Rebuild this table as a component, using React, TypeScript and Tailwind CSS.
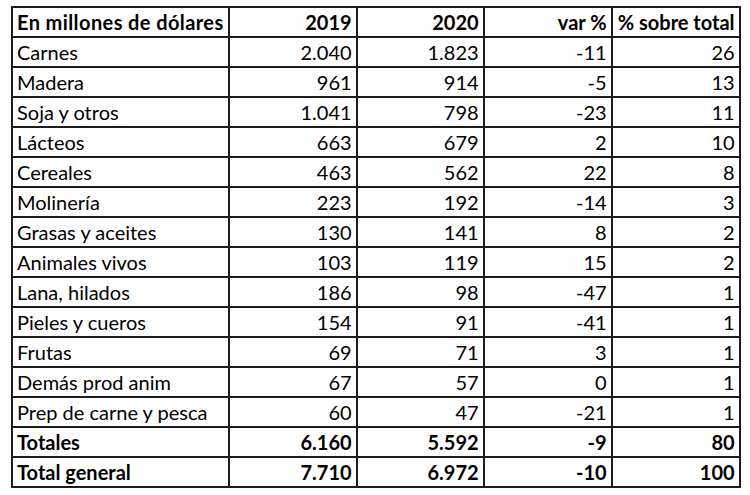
const rows: [string, string, string, string, string][] = [
  ["Carnes", "2.040", "1.823", "-11", "26"],
  ["Madera", "961", "914", "-5", "13"],
  ["Soja y otros", "1.041", "798", "-23", "11"],
  ["Lácteos", "663", "679", "2", "10"],
  ["Cereales", "463", "562", "22", "8"],
  ["Molinería", "223", "192", "-14", "3"],
  ["Grasas y aceites", "130", "141", "8", "2"],
  ["Animales vivos", "103", "119", "15", "2"],
  ["Lana, hilados", "186", "98", "-47", "1"],
  ["Pieles y cueros", "154", "91", "-41", "1"],
  ["Frutas", "69", "71", "3", "1"],
  ["Demás prod anim", "67", "57", "0", "1"],
  ["Prep de carne y pesca", "60", "47", "-21", "1"],
]

const totals: [string, string, string, string, string][] = [
  ["Totales", "6.160", "5.592", "-9", "80"],
  ["Total general", "7.710", "6.972", "-10", "100"],
]

const cell = "h-[30px] whitespace-nowrap border-2 border-[#1c1c1c] px-[4px] leading-none"

export default function App() {
  return (
    <div className="h-[495px] w-[750px] overflow-hidden bg-white pl-[11px] pt-[6px]">
      <table
        className="table-fixed border-collapse text-[20px] text-black"
        style={{ fontFamily: "Lato, 'Open Sans', sans-serif" }}
      >
        <colgroup>
          <col className="w-[215px]" />
          <col className="w-[128px]" />
          <col className="w-[127px]" />
          <col className="w-[128px]" />
          <col className="w-[128px]" />
        </colgroup>
        <thead>
          <tr className="font-bold">
            <th className={`${cell} text-left tracking-[0.4px]`}>En millones de dólares</th>
            <th className={`${cell} text-right`}>2019</th>
            <th className={`${cell} text-right`}>2020</th>
            <th className={`${cell} text-right`}>var %</th>
            <th className={`${cell} text-right`}>% sobre total</th>
          </tr>
        </thead>
        <tbody>
          {rows.map((r) => (
            <tr key={r[0]}>
              <td className={`${cell} text-left`}>{r[0]}</td>
              {r.slice(1).map((v, i) => (
                <td key={i} className={`${cell} text-right`}>
                  {v}
                </td>
              ))}
            </tr>
          ))}
          {totals.map((r) => (
            <tr key={r[0]} className="font-bold">
              <td className={`${cell} text-left`}>{r[0]}</td>
              {r.slice(1).map((v, i) => (
                <td key={i} className={`${cell} text-right`}>
                  {v}
                </td>
              ))}
            </tr>
          ))}
        </tbody>
      </table>
    </div>
  )
}
